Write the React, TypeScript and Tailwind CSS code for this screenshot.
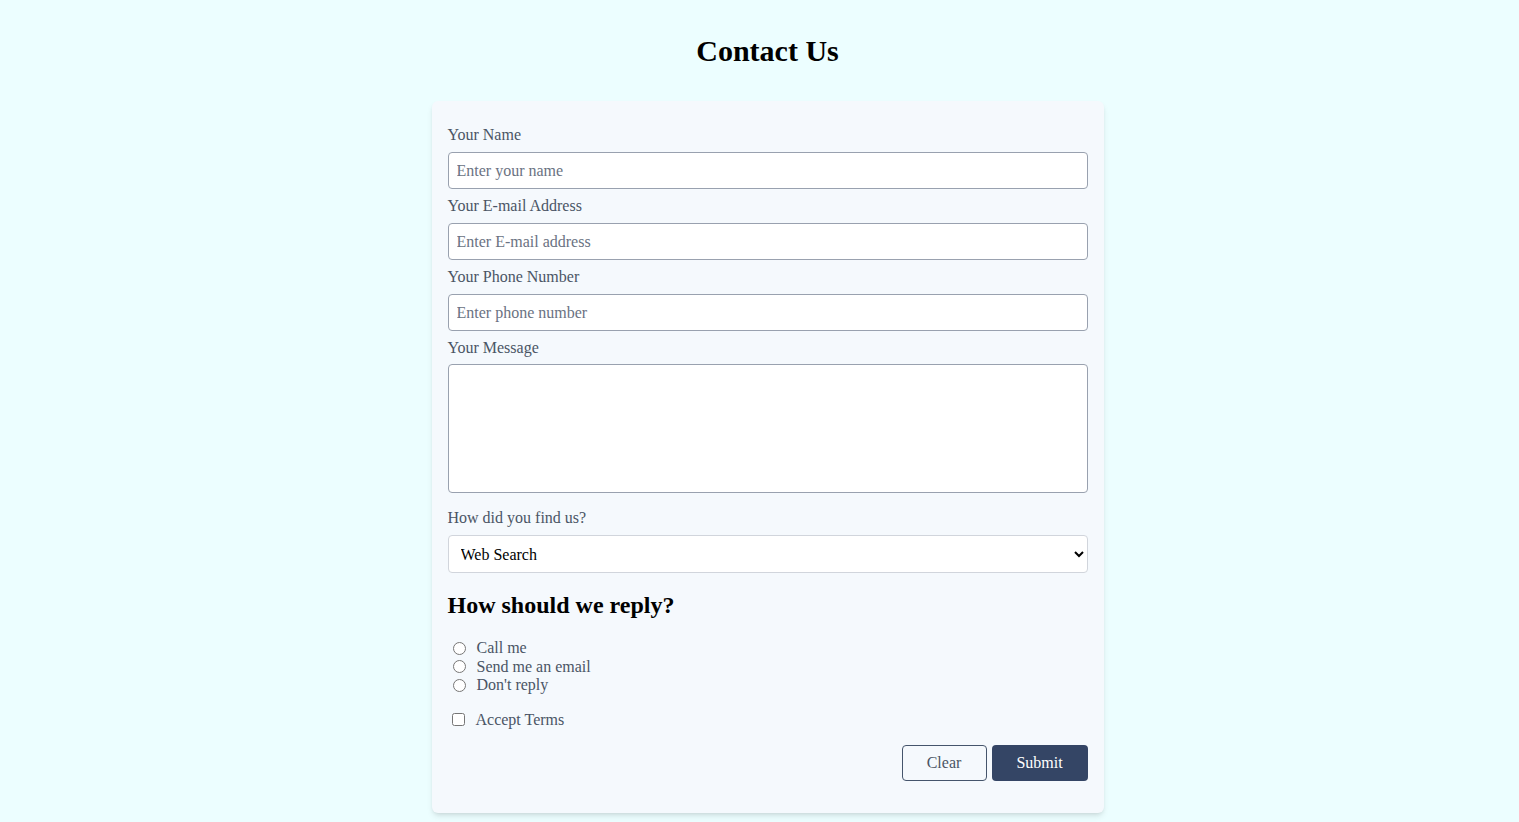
import React from "react";

const Field = ({ label, children }: { label: string; children: React.ReactNode }) => (
  <div className="mb-[5px] flex flex-col">
    <label className="mb-[5px] text-base leading-6 text-gray-600">{label}</label>
    {children}
  </div>
);

export default function App() {
  const inputCls =
    "h-[37px] w-full rounded border border-gray-400 bg-white px-2 text-base text-gray-800 placeholder:text-gray-500 outline-none";

  return (
    <div className="min-h-[822px] bg-[#ecfeff] pl-4 font-['Liberation_Serif',serif] text-black">
      <h1 className="pt-[33px] text-center text-3xl font-bold leading-9">Contact Us</h1>
      <div className="mx-auto mt-8 w-[672px] rounded-md bg-[#f5f9fd] px-4 pb-8 pt-[22px] shadow-md">
        <Field label="Your Name">
          <input className={inputCls} placeholder="Enter your name" />
        </Field>
        <Field label="Your E-mail Address">
          <input className={inputCls} placeholder="Enter E-mail address" />
        </Field>
        <Field label="Your Phone Number">
          <input className={inputCls} placeholder="Enter phone number" />
        </Field>
        <Field label="Your Message">
          <textarea className="-mt-px h-[129px] w-full resize-none rounded border border-gray-400 bg-white px-2 outline-none" />
        </Field>
        <div className="mt-[13px] flex flex-col">
          <label className="mb-[5px] leading-6 text-gray-600">How did you find us?</label>
          <select className="h-[38px] w-full rounded border border-gray-300 bg-white pl-2 pr-2 text-base text-black outline-none">
            <option>Web Search</option>
            <option>Social Media</option>
            <option>Friend</option>
          </select>
        </div>
        <h2 className="mt-4 text-2xl font-bold leading-8">How should we reply?</h2>
        <div className="mt-[18px] flex flex-col text-gray-600">
          {["Call me", "Send me an email", "Don't reply"].map((t) => (
            <label key={t} className="flex items-center leading-[18.5px]">
              <input type="radio" name="reply" className="ml-[5px] mr-[11px] h-[13px] w-[13px]" />
              <span>{t}</span>
            </label>
          ))}
        </div>
        <label className="mt-4 flex items-center leading-[18.5px] text-gray-600">
          <input type="checkbox" className="ml-1 mr-[11px] h-[13px] w-[13px]" />
          <span>Accept Terms</span>
        </label>
        <div className="mt-4 flex justify-end gap-[5px]">
          <button className="h-9 w-[85px] rounded border border-slate-600 text-gray-600">Clear</button>
          <button className="h-9 w-[96px] rounded bg-[#344565] text-white">Submit</button>
        </div>
      </div>
    </div>
  );
}
